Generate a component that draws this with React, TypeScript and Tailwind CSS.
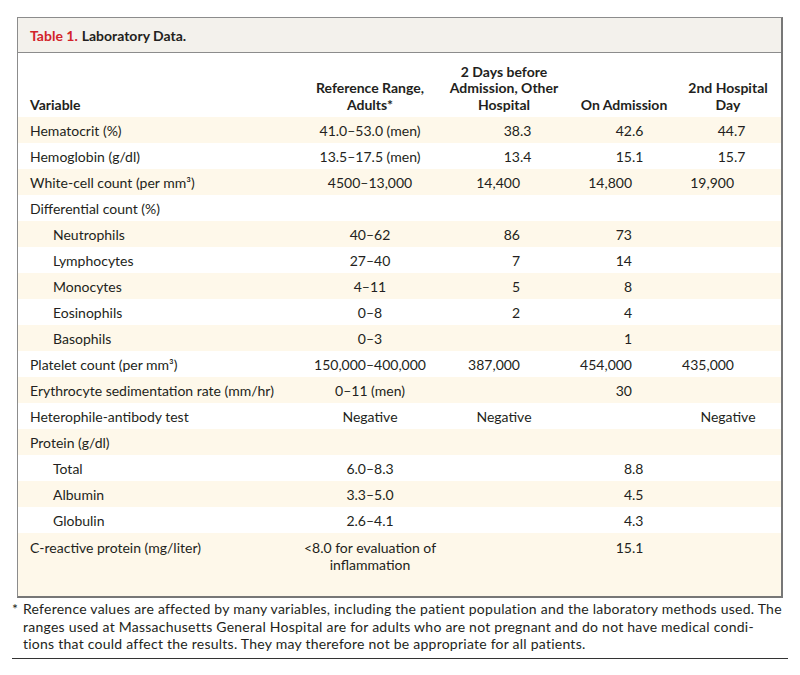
import React from 'react'

type Row = {
  label: string
  sub?: boolean
  ref?: string
  before?: string
  admit?: string
  day2?: string
  tall?: boolean
}

const rows: Row[] = [
  { label: 'Hematocrit (%)', ref: '41.0–53.0 (men)', before: '38.3', admit: '42.6', day2: '44.7' },
  { label: 'Hemoglobin (g/dl)', ref: '13.5–17.5 (men)', before: '13.4', admit: '15.1', day2: '15.7' },
  { label: 'White-cell count (per mm³)', ref: '4500–13,000', before: '14,400', admit: '14,800', day2: '19,900' },
  { label: 'Differential count (%)' },
  { label: 'Neutrophils', sub: true, ref: '40–62', before: '86', admit: '73' },
  { label: 'Lymphocytes', sub: true, ref: '27–40', before: '7', admit: '14' },
  { label: 'Monocytes', sub: true, ref: '4–11', before: '5', admit: '8' },
  { label: 'Eosinophils', sub: true, ref: '0–8', before: '2', admit: '4' },
  { label: 'Basophils', sub: true, ref: '0–3', admit: '1' },
  { label: 'Platelet count (per mm³)', ref: '150,000–400,000', before: '387,000', admit: '454,000', day2: '435,000' },
  { label: 'Erythrocyte sedimentation rate (mm/hr)', ref: '0–11 (men)', admit: '30' },
  { label: 'Heterophile-antibody test', ref: 'Negative', before: 'Negative', day2: 'Negative' },
  { label: 'Protein (g/dl)' },
  { label: 'Total', sub: true, ref: '6.0–8.3', admit: '8.8' },
  { label: 'Albumin', sub: true, ref: '3.3–5.0', admit: '4.5' },
  { label: 'Globulin', sub: true, ref: '2.6–4.1', admit: '4.3' },
  { label: 'C-reactive protein (mg/liter)', ref: '<8.0 for evaluation of inflammation', admit: '15.1', tall: true },
]

// decimal-aligned value: integer part right-aligned in a fixed box
function Val({ v, w }: { v?: string; w: string }) {
  if (!v) return <div />
  if (v === 'Negative') return <div className="text-center">{v}</div>
  const i = v.indexOf('.')
  const head = i >= 0 ? v.slice(0, i) : v
  const tail = i >= 0 ? v.slice(i) : ''
  return (
    <div className="flex">
      <span className={`${w} text-right shrink-0`}>{head}</span>
      <span>{tail}</span>
    </div>
  )
}

const grid = 'grid grid-cols-[282px_140px_128px_112px_96px]'

export default function App() {
  return (
    <div className="w-[800px] h-[675px] bg-white text-[#231f20] text-[14px] font-['Lato','Liberation_Sans',sans-serif] pt-[17px] px-[17px]">
      <div className="border border-[#8c8c8c] border-r-2 border-b-2 border-r-[#777] border-b-[#777]">
        <div className="h-[35px] bg-[#f3f1ec] border-b border-[#8c8c8c] flex items-center pl-[12px] font-bold text-[14px]">
          <span className="text-[#d2232a]">Table 1.</span>
          <span className="ml-[4px]">Laboratory Data.</span>
        </div>

        <div className={`${grid} h-[64px] items-end pb-[4px] font-bold leading-[16.5px]`}>
          <div className="pl-[12px]">Variable</div>
          <div className="text-center">Reference Range,<br />Adults*</div>
          <div className="text-center">2 Days before<br />Admission, Other<br />Hospital</div>
          <div className="text-center">On Admission</div>
          <div className="text-center">2nd Hospital<br />Day</div>
        </div>

        {rows.map((r, idx) => (
          <div
            key={idx}
            className={`${grid} ${r.tall ? 'h-[63px] items-start pt-[6px] leading-[17px]' : 'h-[26px] items-center'} ${idx % 2 === 0 ? 'bg-[#fef8ea]' : 'bg-white'}`}
          >
            <div className={r.sub ? 'pl-[35px]' : 'pl-[12px]'}>{r.label}</div>
            <div className={`text-center ${r.tall ? 'px-[2px]' : ''}`}>{r.ref}</div>
            <Val v={r.before} w="w-[80px]" />
            <Val v={r.admit} w="w-[64px]" />
            <Val v={r.day2} w="w-[54px]" />
          </div>
        ))}
      </div>

      <div className="mt-[2px] -mx-[5px] pl-[11px] text-[14px] leading-[17.5px] tracking-[0.24px] whitespace-nowrap">
        <div className="-ml-[11px]"><span className="inline-block w-[11px]">*</span>Reference values are affected by many variables, including the patient population and the laboratory methods used. The</div>
        <div>ranges used at Massachusetts General Hospital are for adults who are not pregnant and do not have medical condi-</div>
        <div>tions that could affect the results. They may therefore not be appropriate for all patients.</div>
      </div>
      <div className="mt-[5px] -mx-[5px] border-t border-[#333]" />
    </div>
  )
}
